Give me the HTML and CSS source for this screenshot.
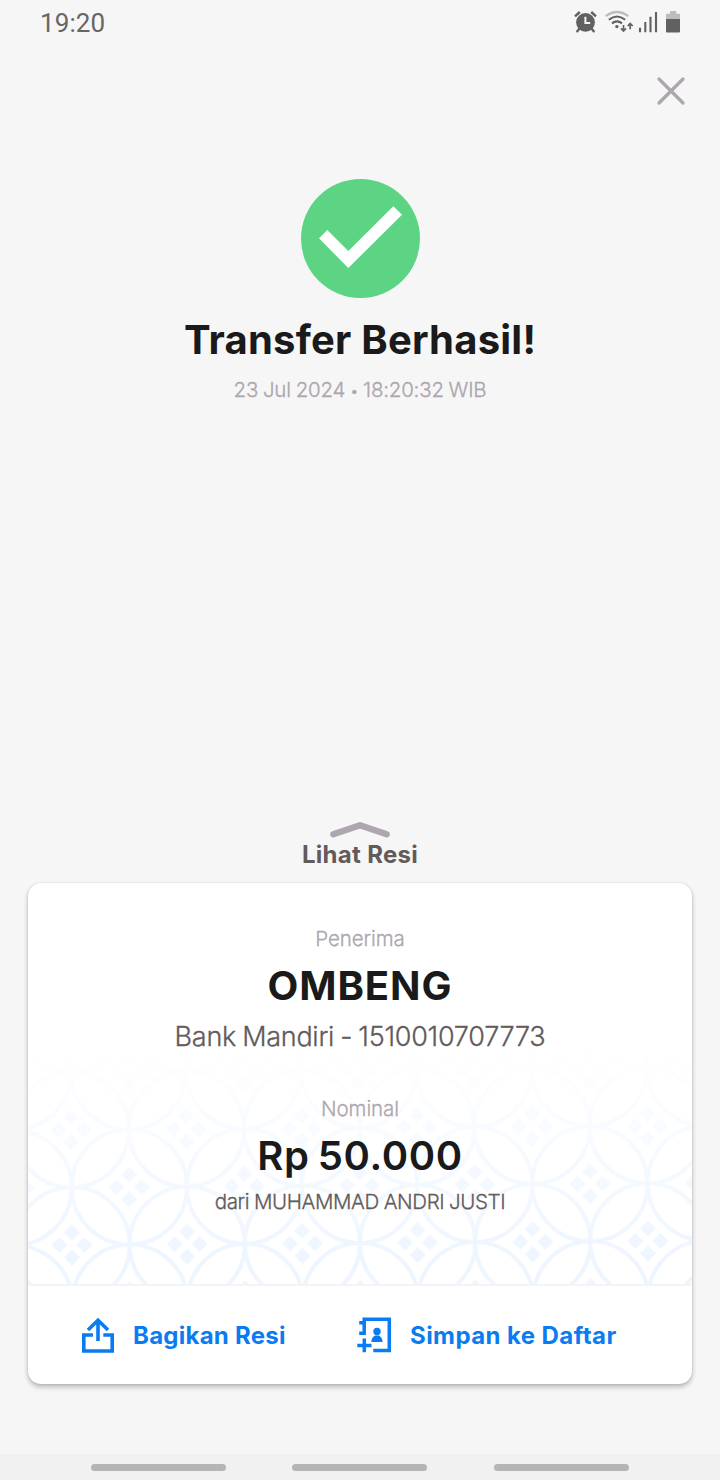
FILE: index.html
```html
<!DOCTYPE html>
<html lang="id">
<head>
<meta charset="utf-8">
<title>Transfer Berhasil</title>
<link rel="stylesheet" href="styles.css">
</head>
<body>
<div class="screen">
  <header class="status">
    <span class="clock">19:20</span>
    <svg class="status-icons" viewBox="572 8 112 28" fill="none">
      <circle cx="585.5" cy="22.3" r="9.4" fill="#616161"/>
      <path d="M575 16.4L579.8 12M596 16.4L591.2 12" stroke="#616161" stroke-width="2.4"/>
      <path d="M579.5 28.5L577.3 31.3M591.5 28.5L593.7 31.3" stroke="#616161" stroke-width="2.4" stroke-linecap="round"/>
      <path d="M585.4 16.8V22.9H590.2" stroke="#f6f6f6" stroke-width="2"/>
      <path d="M605.6 16.2Q617 7.8 628.4 16.2" stroke="#bdbdbd" stroke-width="2.2"/>
      <path d="M608.8 19.8Q617 13.2 625.2 19.8M612 23.4Q617 19.4 622 23.4" stroke="#616161" stroke-width="2.1"/>
      <circle cx="616.9" cy="26.6" r="1.7" fill="#616161"/>
      <path d="M623.5 25V30.5M621 28.4L623.5 31L626 28.4M630.2 29.3V24M627.7 26L630.2 23.4L632.7 26" stroke="#616161" stroke-width="1.7"/>
      <path d="M640 27.7V32.2M645.3 22V32.2M650.5 16.8V32.2M656 12V32.2" stroke="#616161" stroke-width="2.1"/>
      <path d="M670 11H676.3V13.7H680V19H666V13.7H670Z" fill="#bdbdbd"/>
      <path d="M666 19H680V31.4Q680 32.4 679 32.4H667Q666 32.4 666 31.4Z" fill="#616161"/>
    </svg>
  </header>
  <div class="toolbar">
    <svg class="close" viewBox="0 0 30 30"><path d="M3 3L27 27M27 3L3 27" stroke="#aea6ae" stroke-width="3.3" stroke-linecap="round"/></svg>
  </div>
  <main class="result">
    <svg class="success" viewBox="0 0 119 119">
      <circle cx="59.5" cy="59.5" r="59.5" fill="#5dd384"/>
      <path d="M18 59.3L26.3 51L47.3 72L92.3 27.2L101 35.7L47.3 89Z" fill="#fff"/>
    </svg>
    <h1 class="title"><span>Transfer Berhasil!</span></h1>
    <p class="date">23 Jul 2024 <span class="dot">•</span> 18:20:32 WIB</p>
  </main>
  <section class="receipt">
    <svg class="chevron" viewBox="0 0 60 17"><path d="M3.3 13.3L30 4.3L56.7 13.3" fill="none" stroke="#aea6ae" stroke-width="6.4" stroke-linecap="round" stroke-linejoin="round"/></svg>
    <p class="view"><span>Lihat Resi</span></p>
    <div class="card">
      <div class="details">
        <svg class="ornament" viewBox="0 0 664 239">
          <defs>
            <pattern id="kawung" width="115.2" height="115.2" patternUnits="userSpaceOnUse" patternTransform="translate(44 200) rotate(-0.4)">
              <g fill="none" stroke="#edf5ff" stroke-width="4">
                <circle cx="0" cy="0" r="57.6"/><circle cx="115.2" cy="0" r="57.6"/>
                <circle cx="0" cy="115.2" r="57.6"/><circle cx="115.2" cy="115.2" r="57.6"/>
                <circle cx="57.6" cy="57.6" r="57.6"/>
              </g>
              <g fill="#edf5ff">
                <path id="gem" d="M0-20.5L8-12.5L0-4.5L-8-12.5ZM0 4.5L8 12.5L0 20.5L-8 12.5ZM-20.5 0L-12.5-8L-4.5 0L-12.5 8ZM4.5 0L12.5-8L20.5 0L12.5 8Z"/>
                <use href="#gem" x="115.2"/><use href="#gem" y="115.2"/><use href="#gem" x="115.2" y="115.2"/><use href="#gem" x="57.6" y="57.6"/>
              </g>
            </pattern>
            <linearGradient id="fade" x2="0" y2="1"><stop offset="0" stop-color="#fff"/><stop offset="1" stop-color="#fff" stop-opacity="0"/></linearGradient>
          </defs>
          <rect width="664" height="239" fill="url(#kawung)"/>
          <rect width="664" height="225" fill="url(#fade)"/>
        </svg>
        <p class="label recipient-label"><span>Penerima</span></p>
        <h2 class="recipient"><span>OMBENG</span></h2>
        <p class="bank"><span>Bank Mandiri - 1510010707773</span></p>
        <p class="label amount-label"><span>Nominal</span></p>
        <p class="amount"><span>Rp 50.000</span></p>
        <p class="sender"><span>dari MUHAMMAD ANDRI JUSTI</span></p>
      </div>
      <div class="actions">
        <a class="action share">
          <svg class="icon" viewBox="80 1316 36 39" fill="none" stroke="#0a7cf2" stroke-width="3.6">
            <path d="M93 1335H83.8V1351H112.2V1335H103.3M98 1341V1320.5M88 1330L98 1320.3L108 1330"/>
          </svg>
          <span class="share-text">Bagikan Resi</span>
        </a>
        <a class="action save">
          <svg class="icon" viewBox="356 1316 36 39" fill="none" stroke="#0a7cf2" stroke-width="3.5">
            <path d="M373.3 1350.6H389.3V1319.3H364.2V1333.3H359.2M359.2 1322.8H364.2M364.3 1338.5V1352.3M357.3 1345.4H371.5"/>
            <circle cx="377" cy="1331.5" r="3.7" fill="#0a7cf2" stroke="none"/>
            <path d="M371.3 1342Q371.3 1337.5 375 1335.5H379Q382.6 1337.5 382.6 1342Z" fill="#0a7cf2" stroke="none"/>
          </svg>
          <span class="save-text">Simpan ke Daftar</span>
        </a>
      </div>
    </div>
  </section>
  <nav class="navbar"><i></i><i></i><i></i></nav>
</div>
</body>
</html>
```
FILE: styles.css
```css
* { box-sizing: border-box; margin: 0; padding: 0; }
body { background: #f6f6f6; font-family: Inter, "Liberation Sans", sans-serif; }
svg { display: block; }
.screen { width: 720px; height: 1480px; display: flex; flex-direction: column; overflow: hidden; }
.status { height: 46px; flex: none; display: flex; justify-content: space-between; padding: 8px 36px 0 40px; }
.clock { font: 400 26px/30px Roboto, sans-serif; color: #666; letter-spacing: .1px; }
.status-icons { width: 112px; height: 28px; }
.toolbar { height: 133px; flex: none; display: flex; justify-content: flex-end; padding: 30px 34px 0 0; }
.close { width: 30px; height: 30px; }
.result { height: 642px; flex: none; display: flex; flex-direction: column; align-items: center; }
.success { width: 119px; height: 119px; margin-left: 1px; }
.title { margin-top: 18px; font-size: 40px; line-height: 48px; font-weight: 700; letter-spacing: .22px; color: #1a1a1a; white-space: nowrap; }
.date, .label, .bank, .sender { font-weight: 300; -webkit-text-stroke: .3px currentColor; }
.date { margin-top: 13px; font-size: 20.5px; line-height: 26px; letter-spacing: -.22px; word-spacing: -.7px; color: #aea6ae; white-space: nowrap; }
.dot { font-size: 15px; vertical-align: 1px; }
.receipt { height: 633px; flex: none; display: flex; flex-direction: column; align-items: center; }
.chevron { width: 60px; height: 17px; }
.view { margin-top: 2px; margin-bottom: 13px; font-size: 24px; line-height: 30px; font-weight: 700; letter-spacing: .3px; color: #625a5b; }
.card { width: 664px; height: 501px; background: #fff; border-radius: 13px; box-shadow: 0 3px 5px rgba(0,0,0,.25), 0 0 2px rgba(0,0,0,.14); }
.details { position: relative; height: 403px; border-bottom: 2px solid #f3f4f5; display: flex; flex-direction: column; align-items: center; padding-top: 43px; white-space: nowrap; }
.details p, .details h2 { position: relative; }
.ornament { position: absolute; left: 0; bottom: 0; width: 664px; height: 239px; }
.label { font-size: 20.5px; line-height: 26px; letter-spacing: -.08px; color: #aea6ae; }
.recipient { margin-top: 10px; font-size: 40px; line-height: 48px; font-weight: 700; letter-spacing: .95px; color: #1a1a1a; }
.bank { margin-top: 10px; font-size: 27px; line-height: 34px; letter-spacing: -.27px; word-spacing: -1.2px; color: #625a5b; }
.amount-label { margin-top: 42px; }
.amount { margin-top: 10px; font-size: 40px; line-height: 48px; font-weight: 600; letter-spacing: .6px; word-spacing: -2.5px; color: #1a1a1a; }
.sender { margin-top: 9px; font-size: 20.5px; line-height: 26px; letter-spacing: -.38px; word-spacing: -.6px; color: #625a5b; }
.actions { height: 98px; display: flex; padding-left: 52px; }
.action { display: flex; align-items: center; color: #0a7cf2; font-size: 24px; font-weight: 700; letter-spacing: .25px; white-space: nowrap; }
.share { width: 276px; gap: 17px; }
.save { gap: 18px; letter-spacing: .42px; }
.icon { width: 36px; height: 39px; }
.navbar { height: 26px; flex: none; display: grid; grid-template-columns: 201px 202px 135px; padding: 9.5px 0 0 91px; background: #f1f1f1; }
.navbar i { width: 135px; height: 7px; border-radius: 3.5px; background: #b5b5b5; }
```
